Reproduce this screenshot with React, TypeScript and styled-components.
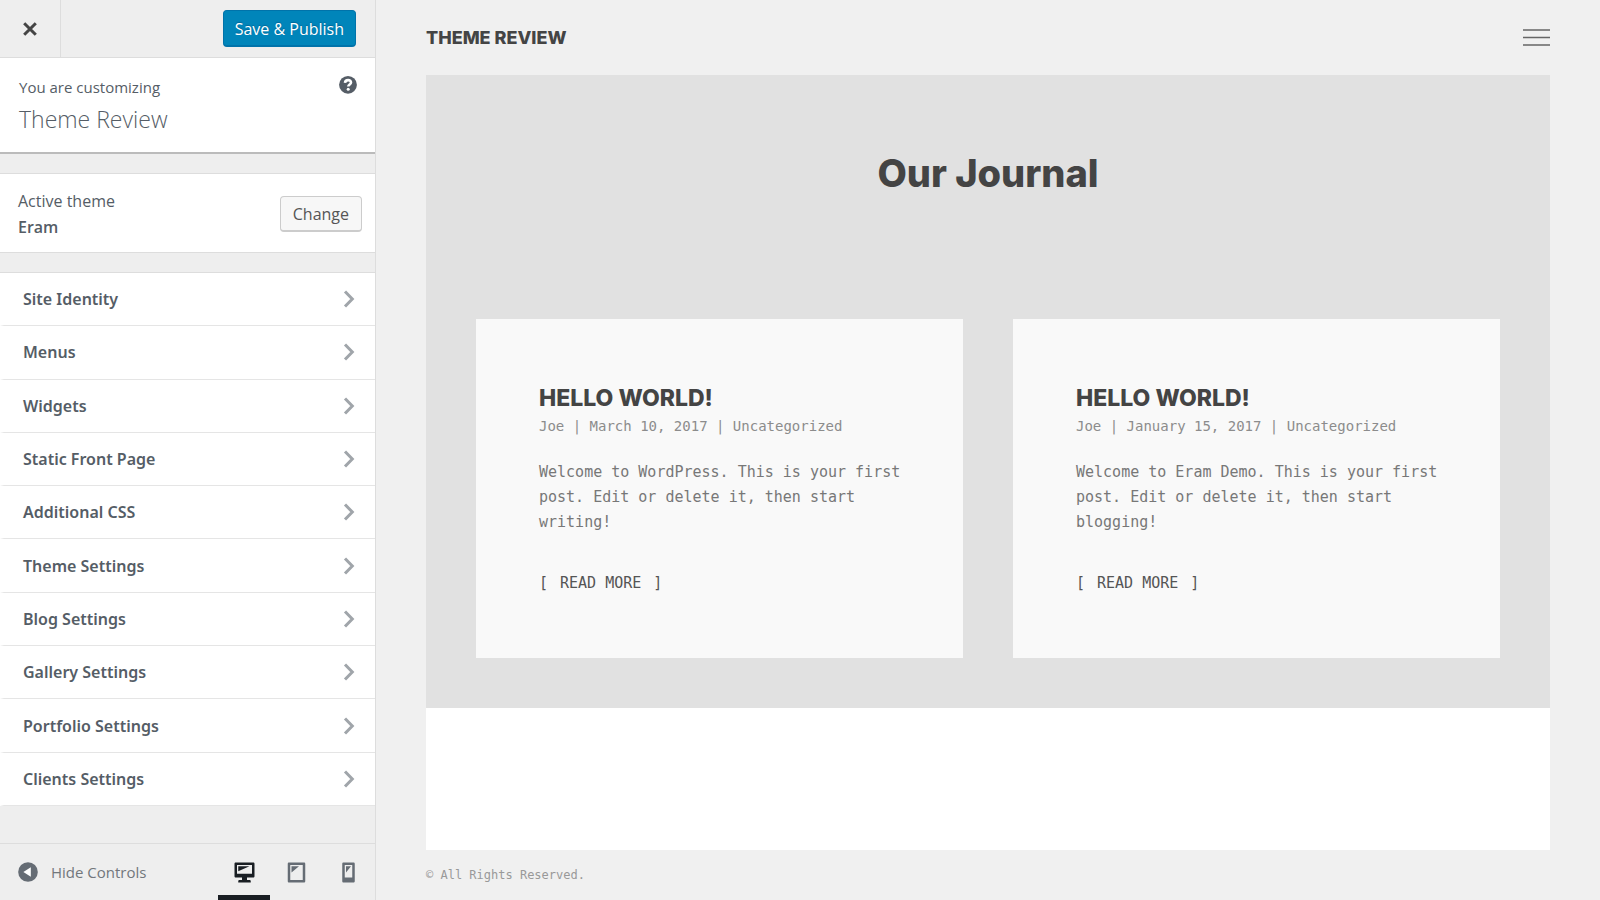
import React from "react";
import styled, { createGlobalStyle } from "styled-components";

const sans = '"Open Sans", "Noto Sans", sans-serif';
const sansWide = '"Noto Sans", "Open Sans", sans-serif';
const mono = '"DejaVu Sans Mono", "Liberation Mono", monospace';
const display = 'Inter, "Open Sans", sans-serif';

const GlobalStyle = createGlobalStyle`
  *, *::before, *::after { box-sizing: border-box; }
  body { margin: 0; background: #f0f0f0; }
  h1, h2, h3, p, ul { margin: 0; padding: 0; }
  button { font: inherit; padding: 0; border: 0; background: none; cursor: pointer; }
  a { color: inherit; text-decoration: none; }
  svg { display: block; }
`;

const Page = styled.div`
  display: grid;
  grid-template-columns: 376px minmax(0, 1fr);
  min-height: 100vh;
`;

const Sidebar = styled.aside`
  display: flex;
  flex-direction: column;
  background: #eee;
  border-right: 1px solid #ddd;
  color: #555d66;
  font-family: ${sans};
  font-size: 16px;
  line-height: 26px;
`;

const TopBar = styled.header`
  display: flex;
  align-items: center;
  justify-content: space-between;
  height: 58px;
  padding-right: 19px;
  border-bottom: 1px solid #ddd;
`;

const CloseButton = styled.button`
  display: grid;
  place-items: center;
  align-self: stretch;
  width: 61px;
  border-right: 1px solid #ddd;
  color: #444;
`;

const SaveButton = styled.button`
  height: 37px;
  padding: 1px 11px 0;
  border: 1px solid #0073aa;
  border-bottom-width: 2px;
  border-radius: 4px;
  background: #0085ba;
  color: #fff;
  font-size: 16px;
  text-shadow: 0 -1px 1px #006799;
`;

const Intro = styled.section`
  display: flex;
  justify-content: space-between;
  align-items: flex-start;
  height: 96px;
  padding: 16px 18px 0 19px;
  background: #fff;
  border-bottom: 2px solid #bbb;
`;

const IntroLabel = styled.p`
  font-size: 15px;
`;

const SiteTitle = styled.h1`
  font-size: 23px;
  font-weight: 300;
  line-height: 38px;
`;

const HelpButton = styled.button`
  color: #555d66;
`;

const ThemePanel = styled.section`
  display: flex;
  align-items: center;
  justify-content: space-between;
  height: 80px;
  margin: 19px 0;
  padding: 2px 13px 0 18px;
  background: #fff;
  border: solid #ddd;
  border-width: 1px 0;
`;

const ThemeName = styled.strong`
  display: block;
  font-weight: 600;
`;

const ChangeButton = styled.button`
  height: 36px;
  padding: 0 12px;
  border: 1px solid #ccc;
  border-bottom-width: 2px;
  border-radius: 4px;
  background: #f7f7f7;
  color: #555;
`;

const SectionList = styled.ul`
  display: grid;
  grid-auto-rows: 1fr;
  height: 534px;
  border-top: 1px solid #ddd;
  list-style: none;
`;

const SectionItem = styled.li`
  display: grid;
`;

const SectionButton = styled.button`
  display: flex;
  align-items: center;
  justify-content: space-between;
  padding: 0 20px 0 19px;
  background: #fff;
  border-left: 4px solid #fff;
  border-bottom: 1px solid #e5e5e5;
  color: #555d66;
  font-family: ${sansWide};
  font-size: 16px;
  font-weight: 600;
`;

const BottomBar = styled.footer`
  display: flex;
  align-items: stretch;
  height: 57px;
  margin-top: auto;
  border-top: 1px solid #ddd;
`;

const CollapseButton = styled.button`
  display: flex;
  align-items: center;
  gap: 13px;
  margin-right: auto;
  padding-left: 18px;
  color: #72777c;
  font-size: 15px;
`;

const DeviceButton = styled.button<{ $active?: boolean }>`
  display: grid;
  place-items: center;
  width: 52px;
  padding-top: 5px;
  border-bottom: 5px solid ${(p) => (p.$active ? "#191e23" : "transparent")};
  color: ${(p) => (p.$active ? "#191e23" : "#656c74")};
`;

const DeviceGroup = styled.div`
  display: flex;
  padding-right: 1px;
`;

const Preview = styled.div`
  display: flex;
  flex-direction: column;
  padding: 0 50px;
  background: #f0f0f0;
  color: #444;
  font-family: ${mono};
`;

const SiteHeader = styled.header`
  display: flex;
  align-items: center;
  justify-content: space-between;
  height: 75px;
`;

const Brand = styled.a`
  font-family: ${display};
  font-size: 18px;
  font-weight: 800;
  line-height: 24px;
`;

const MenuButton = styled.button`
  color: #666;
`;

const Journal = styled.main`
  padding: 70px 50px 50px;
  background: #e1e1e1;
`;

const JournalTitle = styled.h2`
  margin-bottom: 118px;
  font-family: ${display};
  font-size: 38px;
  font-weight: 800;
  line-height: 56px;
  text-align: center;
`;

const Posts = styled.div`
  display: grid;
  grid-template-columns: repeat(2, minmax(0, 1fr));
  gap: 50px;
`;

const Post = styled.article`
  min-height: 339px;
  padding: 63px 48px 48px 63px;
  background: #f9f9f9;
`;

const PostTitle = styled.h3`
  font-family: ${display};
  font-size: 23px;
  font-weight: 800;
  line-height: 32px;
`;

const Meta = styled.p`
  color: #8c8c8c;
  font-size: 14px;
  line-height: 24px;
`;

const Excerpt = styled.p`
  margin: 22px 0 36px;
  color: #777;
  font-size: 15px;
  line-height: 25px;
`;

const ReadMore = styled.a`
  display: inline-flex;
  gap: 12px;
  font-size: 15px;
  line-height: 24px;
  color: #555;
`;

const Blank = styled.section`
  flex: 1;
  min-height: 142px;
  background: #fff;
`;

const SiteFooter = styled.footer`
  height: 50px;
  color: #999;
  font-size: 12px;
  line-height: 50px;
`;

const sections = [
  "Site Identity",
  "Menus",
  "Widgets",
  "Static Front Page",
  "Additional CSS",
  "Theme Settings",
  "Blog Settings",
  "Gallery Settings",
  "Portfolio Settings",
  "Clients Settings",
];

const posts = [
  {
    title: "HELLO WORLD!",
    meta: "Joe | March 10, 2017 | Uncategorized",
    text: "Welcome to WordPress. This is your first post. Edit or delete it, then start writing!",
  },
  {
    title: "HELLO WORLD!",
    meta: "Joe | January 15, 2017 | Uncategorized",
    text: "Welcome to Eram Demo. This is your first post. Edit or delete it, then start blogging!",
  },
];

const devices = [
  {
    name: "Desktop",
    path: "M3 2h14c.55 0 1 .45 1 1v10c0 .55-.45 1-1 1h-5v2h2c.55 0 1 .45 1 1v1H5v-1c0-.55.45-1 1-1h2v-2H3c-.55 0-1-.45-1-1V3c0-.55.45-1 1-1zm13 9V4H4v7h12zM5 5h9L5 9V5z",
  },
  {
    name: "Tablet",
    path: "M4 2h12c.55 0 1 .45 1 1v14c0 .55-.45 1-1 1H4c-.55 0-1-.45-1-1V3c0-.55.45-1 1-1zm11 14V4H5v12h10zM6 5h6l-6 5V5z",
  },
  {
    name: "Mobile",
    path: "M6 2h8c.55 0 1 .45 1 1v14c0 .55-.45 1-1 1H6c-.55 0-1-.45-1-1V3c0-.55.45-1 1-1zm7 12V4H7v10h6zM8 5h4l-4 5V5z",
  },
];

const Chevron = () => (
  <svg width="12" height="18" viewBox="0 0 12 18" fill="none" stroke="#a0a5aa" strokeWidth="3" aria-hidden="true">
    <path d="M2 1.5 9.3 9 2 16.5" />
  </svg>
);

export default function App() {
  return (
    <>
      <GlobalStyle />
      <Page>
        <Sidebar>
          <TopBar>
            <CloseButton aria-label="Close">
              <svg width="14" height="14" viewBox="0 0 14 14" fill="none" stroke="currentColor" strokeWidth="3">
                <path d="M1.2 1.2 12.8 12.8M12.8 1.2 1.2 12.8" />
              </svg>
            </CloseButton>
            <SaveButton>Save &amp; Publish</SaveButton>
          </TopBar>
          <Intro>
            <div>
              <IntroLabel>You are customizing</IntroLabel>
              <SiteTitle>Theme Review</SiteTitle>
            </div>
            <HelpButton aria-label="Help">
              <svg width="18" height="22" viewBox="0 0 18 22">
                <circle cx="9" cy="10.8" r="8.9" fill="currentColor" />
                <path
                  d="M6 8.9C6.1 7.1 7.3 6.1 9.1 6.1c1.8 0 2.9 1 2.9 2.4 0 2-2.7 2.1-2.7 4.1"
                  fill="none"
                  stroke="#fff"
                  strokeWidth="2.6"
                />
                <circle cx="9.2" cy="15.3" r="1.5" fill="#fff" />
              </svg>
            </HelpButton>
          </Intro>
          <ThemePanel>
            <div>
              <p>Active theme</p>
              <ThemeName>Eram</ThemeName>
            </div>
            <ChangeButton>Change</ChangeButton>
          </ThemePanel>
          <SectionList>
            {sections.map((name) => (
              <SectionItem key={name}>
                <SectionButton>
                  {name}
                  <Chevron />
                </SectionButton>
              </SectionItem>
            ))}
          </SectionList>
          <BottomBar>
            <CollapseButton>
              <svg width="20" height="20" viewBox="0 0 20 20" aria-hidden="true">
                <circle cx="10" cy="10" r="9.8" fill="#656c74" />
                <path d="M12.8 5.2v9.6L5.4 10z" fill="#fff" />
              </svg>
              Hide Controls
            </CollapseButton>
            <DeviceGroup>
              {devices.map((device, i) => (
                <DeviceButton key={device.name} $active={i === 0} aria-label={device.name}>
                  <svg width="25" height="25" viewBox="0 0 20 20" fill="currentColor">
                    <path d={device.path} />
                  </svg>
                </DeviceButton>
              ))}
            </DeviceGroup>
          </BottomBar>
        </Sidebar>
        <Preview>
          <SiteHeader>
            <Brand href="#">THEME REVIEW</Brand>
            <MenuButton aria-label="Menu">
              <svg width="27" height="17" viewBox="0 0 27 17" fill="none" stroke="currentColor" strokeWidth="1.3">
                <path d="M0 1h27M0 8.5h27M0 16h27" />
              </svg>
            </MenuButton>
          </SiteHeader>
          <Journal>
            <JournalTitle>Our Journal</JournalTitle>
            <Posts>
              {posts.map((post) => (
                <Post key={post.meta}>
                  <PostTitle>{post.title}</PostTitle>
                  <Meta>{post.meta}</Meta>
                  <Excerpt>{post.text}</Excerpt>
                  <ReadMore href="#">
                    <span>[</span>
                    <span>READ MORE</span>
                    <span>]</span>
                  </ReadMore>
                </Post>
              ))}
            </Posts>
          </Journal>
          <Blank />
          <SiteFooter>© All Rights Reserved.</SiteFooter>
        </Preview>
      </Page>
    </>
  );
}
